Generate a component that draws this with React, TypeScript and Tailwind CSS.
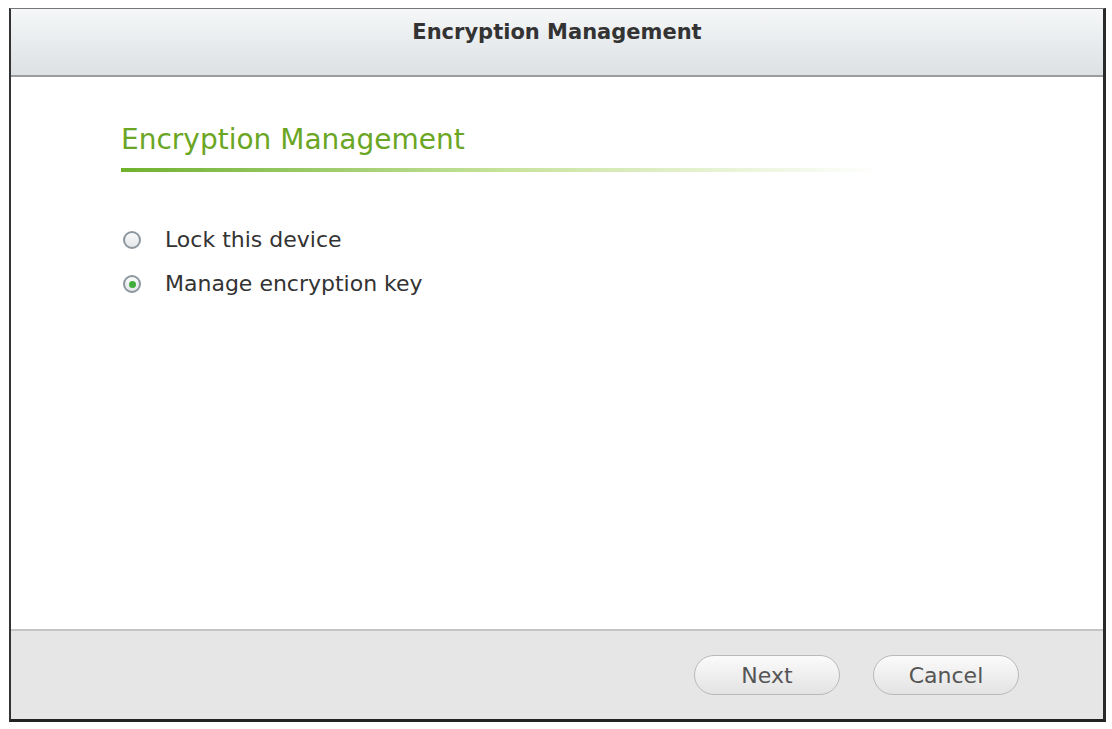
export default function App() {
  return (
    <div className="w-[1112px] h-[729px] bg-white pt-[8px] pl-[9px]" style={{ fontFamily: '"DejaVu Sans", Verdana, sans-serif' }}>
      <div className="w-[1097px] h-[714px] flex flex-col border-l-[2px] border-t border-r-[3px] border-b-[3px] border-l-[#333] border-t-[#777] border-r-[#2a2a2a] border-b-[#222] bg-white">
        {/* title bar */}
        <div className="h-[68px] shrink-0 flex items-center justify-center bg-gradient-to-b from-[#f5f7f8] to-[#dde1e4] border-b-[2px] border-[#9a9c9e]">
          <span className="text-[21px] font-bold text-[#333] -mt-[18px]">Encryption Management</span>
        </div>

        {/* body */}
        <div className="flex-1 pl-[110px] pt-[45px]">
          <h2 className="text-[28px] leading-[35px] text-[#6aa624]">Encryption Management</h2>
          <div className="mt-[11px] h-[4px] w-[760px] bg-gradient-to-r from-[#6fb12a] via-[#c6e29a] to-transparent" />

          <div className="mt-[57px] flex flex-col gap-[22px]">
            <label className="flex items-center gap-[24px] text-[22px] leading-[22px] text-[#333]">
              <span className="ml-[2px] w-[18px] h-[18px] rounded-full border-[2px] border-[#8e979e] bg-gradient-to-b from-[#fafafa] to-[#e4e7ea]" />
              Lock this device
            </label>
            <label className="flex items-center gap-[24px] text-[22px] leading-[22px] text-[#333]">
              <span className="ml-[2px] w-[18px] h-[18px] rounded-full border-[2px] border-[#8e979e] bg-gradient-to-b from-[#fafafa] to-[#e4e7ea] flex items-center justify-center">
                <span className="w-[7px] h-[7px] rounded-full bg-[#3fae3a]" />
              </span>
              Manage encryption key
            </label>
          </div>
        </div>

        {/* footer */}
        <div className="h-[90px] shrink-0 bg-[#e6e6e6] border-t-[2px] border-[#c4c4c4] flex items-center justify-end gap-[33px] pr-[84px]">
          <button className="w-[146px] h-[40px] rounded-full border border-[#b9b9b9] bg-gradient-to-b from-[#fbfbfb] to-[#e3e3e3] text-[22px] text-[#555]">Next</button>
          <button className="w-[146px] h-[40px] rounded-full border border-[#b9b9b9] bg-gradient-to-b from-[#fbfbfb] to-[#e3e3e3] text-[22px] text-[#555]">Cancel</button>
        </div>
      </div>
    </div>
  );
}
